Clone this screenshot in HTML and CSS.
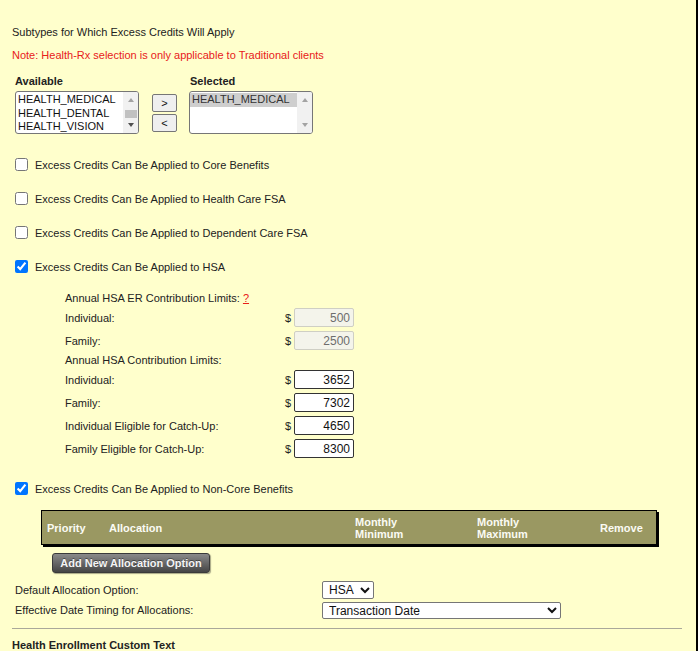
FILE: index.html
```html
<!DOCTYPE html>
<html>
<head>
<meta charset="utf-8">
<link rel="stylesheet" href="styles.css">
</head>
<body>
<div class="page">
  <div class="title">Subtypes for Which Excess Credits Will Apply</div>
  <div class="note">Note: Health-Rx selection is only applicable to Traditional clients</div>

  <div class="picker">
    <div class="pick-col">
      <div class="pick-label">Available</div>
      <div class="listbox">
        <div class="options">
          <div class="opt">HEALTH_MEDICAL</div>
          <div class="opt">HEALTH_DENTAL</div>
          <div class="opt">HEALTH_VISION</div>
        </div>
        <div class="sbar">
          <span class="arr up"></span>
          <span class="thumb"></span>
          <span class="arr down dark"></span>
        </div>
      </div>
    </div>
    <div class="move-btns">
      <button class="mv">&gt;</button>
      <button class="mv">&lt;</button>
    </div>
    <div class="pick-col sel-col">
      <div class="pick-label">Selected</div>
      <div class="listbox">
        <div class="options">
          <div class="opt selected">HEALTH_MEDICAL</div>
        </div>
        <div class="sbar">
          <span class="arr up"></span>
          <span class="arr down"></span>
        </div>
      </div>
    </div>
  </div>

  <div class="checks">
    <label class="chk-row"><input type="checkbox"><span>Excess Credits Can Be Applied to Core Benefits</span></label>
    <label class="chk-row"><input type="checkbox"><span>Excess Credits Can Be Applied to Health Care FSA</span></label>
    <label class="chk-row"><input type="checkbox"><span>Excess Credits Can Be Applied to Dependent Care FSA</span></label>
    <label class="chk-row"><input type="checkbox" checked><span>Excess Credits Can Be Applied to HSA</span></label>
  </div>

  <div class="hsa">
    <div class="hsa-head">Annual HSA ER Contribution Limits: <a class="help">?</a></div>
    <div class="hsa-row"><span class="hsa-label">Individual:</span><span class="cur">$</span><input class="amt" type="text" value="500" disabled></div>
    <div class="hsa-row"><span class="hsa-label">Family:</span><span class="cur">$</span><input class="amt" type="text" value="2500" disabled></div>
    <div class="hsa-head">Annual HSA Contribution Limits:</div>
    <div class="hsa-row"><span class="hsa-label">Individual:</span><span class="cur">$</span><input class="amt" type="text" value="3652"></div>
    <div class="hsa-row"><span class="hsa-label">Family:</span><span class="cur">$</span><input class="amt" type="text" value="7302"></div>
    <div class="hsa-row"><span class="hsa-label">Individual Eligible for Catch-Up:</span><span class="cur">$</span><input class="amt" type="text" value="4650"></div>
    <div class="hsa-row"><span class="hsa-label">Family Eligible for Catch-Up:</span><span class="cur">$</span><input class="amt" type="text" value="8300"></div>
  </div>

  <label class="chk-row noncore"><input type="checkbox" checked><span>Excess Credits Can Be Applied to Non-Core Benefits</span></label>

  <div class="alloc-table">
    <div class="th">Priority</div>
    <div class="th">Allocation</div>
    <div class="th">Monthly<br>Minimum</div>
    <div class="th">Monthly<br>Maximum</div>
    <div class="th">Remove</div>
  </div>

  <button class="add-btn">Add New Allocation Option</button>

  <div class="field-row">
    <span class="field-label">Default Allocation Option:</span>
    <select class="sel sel-short"><option>HSA</option></select>
  </div>
  <div class="field-row">
    <span class="field-label">Effective Date Timing for Allocations:</span>
    <select class="sel sel-long"><option>Transaction Date</option></select>
  </div>

  <hr class="divider">

  <div class="section-title">Health Enrollment Custom Text</div>
</div>
</body>
</html>
```

FILE: styles.css
```css
html, body {
  margin: 0;
  padding: 0;
  background: #ffffcc;
}

.page {
  box-sizing: border-box;
  width: 698px;
  height: 651px;
  overflow: hidden;
  background: #ffffcc;
  border-right: 2px solid #000;
  padding: 25px 0 0 12px;
  font-family: "Liberation Sans", Arial, sans-serif;
  font-size: 11px;
  line-height: 14px;
  color: #222;
}

.title {
  height: 14px;
}

.note {
  margin-top: 9px;
  color: #e8201a;
}

/* picker */
.picker {
  display: flex;
  margin-top: 12px;
  margin-left: 3px;
}

.pick-label {
  font-weight: bold;
  height: 14px;
  margin-bottom: 3px;
}

.sel-col .pick-label {
  padding-left: 1px;
}

.listbox {
  box-sizing: border-box;
  width: 124px;
  height: 43px;
  border: 1px solid #767676;
  border-radius: 3px;
  background: #fff;
  display: flex;
  overflow: hidden;
}

.options {
  flex: 1;
  padding-top: 1px;
  font-size: 11px;
  line-height: 13.5px;
  color: #111;
}

.opt {
  padding-left: 2px;
  white-space: nowrap;
}

.opt.selected {
  background: #cecece;
  color: #333;
}

.sbar {
  width: 15px;
  background: #f1f1f1;
  display: flex;
  flex-direction: column;
  align-items: center;
}

.arr {
  width: 0;
  height: 0;
  border-left: 3.5px solid transparent;
  border-right: 3.5px solid transparent;
}

.arr.up {
  margin-top: 6px;
  border-bottom: 4px solid #a3a3a3;
}

.arr.down {
  margin-top: auto;
  margin-bottom: 6px;
  border-top: 4px solid #a3a3a3;
}

.arr.down.dark {
  border-top-color: #505050;
}

.thumb {
  width: 12px;
  height: 8px;
  margin-top: 8px;
  background: #c1c1c1;
}

.move-btns {
  display: flex;
  flex-direction: column;
  gap: 2px;
  margin-left: 13px;
  margin-top: 20px;
}

.mv {
  box-sizing: border-box;
  width: 25px;
  height: 18px;
  padding: 0;
  border: 1px solid #767676;
  border-radius: 2px;
  background: #efefef;
  font-family: "Liberation Sans", Arial, sans-serif;
  font-size: 11px;
  color: #111;
}

.sel-col {
  margin-left: 12px;
}

/* checkboxes */
.checks {
  margin-top: 13px;
}

.chk-row {
  display: flex;
  align-items: center;
  height: 34px;
  padding-left: 3px;
  padding-top: 1px;
  box-sizing: border-box;
}

.chk-row input {
  width: 13px;
  height: 13px;
  margin: 0 7px 0 0;
  accent-color: #0075ff;
}

/* HSA */
.hsa {
  margin-top: 7px;
  padding-left: 53px;
}

.hsa-head {
  height: 16px;
  line-height: 16px;
}

.help {
  color: #e8201a;
  text-decoration: underline;
}

.hsa-row {
  display: flex;
  align-items: center;
  height: 23px;
}

.hsa-label {
  width: 220px;
}

.cur {
  width: 9px;
}

.amt {
  box-sizing: border-box;
  width: 60px;
  height: 19px;
  padding: 0 3px;
  border: 1px solid #333;
  border-radius: 2px;
  background: #fff;
  text-align: right;
  font-family: "Liberation Sans", Arial, sans-serif;
  font-size: 12px;
  color: #111;
}

.amt:disabled {
  background: #f4f4eb;
  border-color: #cfcfc4;
  color: #6d6d6d;
}

.noncore {
  margin-top: 11px;
}

/* table */
.alloc-table {
  box-sizing: border-box;
  width: 616px;
  height: 35px;
  margin: 5px 0 0 29px;
  border: 1px solid #000;
  box-shadow: 2px 2px 0 #000;
  background: #9a9862;
  display: grid;
  grid-template-columns: 62px 246px 122px 123px 1fr;
  align-items: center;
}

.th {
  padding-left: 5px;
  color: #fbfbf4;
  font-weight: bold;
  font-size: 11px;
  line-height: 12px;
}

.add-btn {
  display: block;
  box-sizing: border-box;
  width: 158px;
  height: 20px;
  margin: 8px 0 0 40px;
  padding: 0;
  border: 1px solid #3a3a3a;
  border-radius: 3px;
  background: linear-gradient(#8a8a8a, #454545);
  box-shadow: 1px 1px 1px rgba(0, 0, 0, 0.35);
  color: #f4f4f4;
  font-family: "Liberation Sans", Arial, sans-serif;
  font-size: 11px;
  font-weight: bold;
  text-shadow: 0 -1px 0 rgba(0, 0, 0, 0.4);
}

.add-btn + .field-row {
  margin-top: 7px;
}

.field-row {
  display: flex;
  align-items: center;
  height: 20px;
  padding-left: 3px;
}

.field-label {
  width: 307px;
}

.sel {
  box-sizing: border-box;
  height: 18px;
  padding: 0 0 0 2px;
  border: 1px solid #767676;
  border-radius: 2px;
  background: #fff;
  font-family: "Liberation Sans", Arial, sans-serif;
  font-size: 12px;
  color: #111;
}

.sel-short {
  width: 52px;
}

.sel-long {
  width: 239px;
  height: 17px;
}

.divider {
  width: 670px;
  margin: 8px 0 0 0;
  border: 0;
  border-top: 1px solid #aaa89a;
  height: 0;
}

.section-title {
  margin-top: 9px;
  font-weight: bold;
}
```
